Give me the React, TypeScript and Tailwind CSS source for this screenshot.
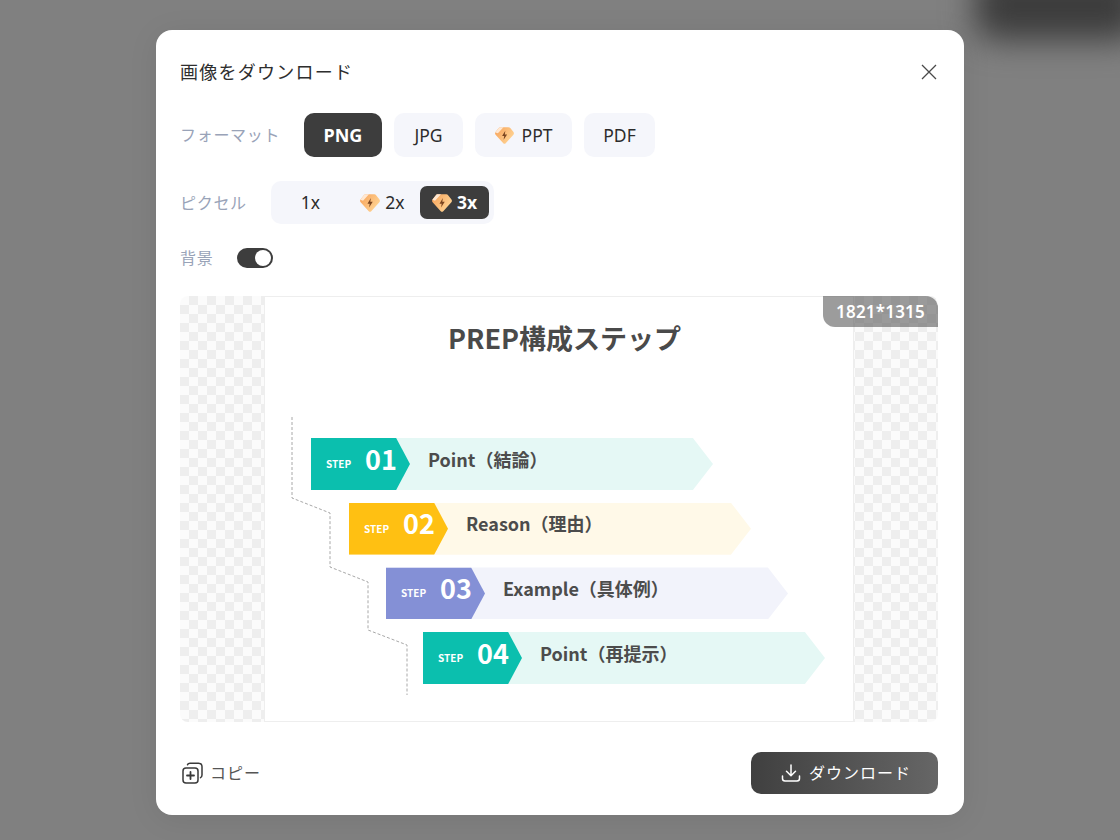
import React from "react";

const FONT = "[font-family:'Noto_Sans','Noto_Sans_CJK_JP',sans-serif]";
const SLIDE = "[font-family:'Noto_Sans_CJK_JP','Noto_Sans',sans-serif]";

function Gem({ className = "" }: { className?: string }) {
  return (
    <svg viewBox="0.5 0.5 19 17" className={className}>
      <defs>
        <linearGradient id="gemg" x1="0" y1="0" x2="1" y2="0.6">
          <stop offset="0" stopColor="#f7a158" />
          <stop offset="1" stopColor="#ffd494" />
        </linearGradient>
      </defs>
      <path d="M6 .8H14Q15.2 .8 16 1.8L19 5.6Q20 7.2 18.7 8.6L11.2 16.8Q10 17.8 8.8 16.8L1.3 8.6Q0 7.2 1 5.6L4 1.8Q4.8 .8 6 .8Z" fill="url(#gemg)" />
      <path d="M5.6 .8H9L3.4 6.8 .8 6 4 1.8Q4.6 1 5.6 .8Z" fill="#ffe8d2" />
      <path d="M10.8 4.2 7.6 9.6H9.7L9.1 13.2 12.6 7.9H10.3Z" fill="#7a4520" />
    </svg>
  );
}

function Chip({ children, active = false, w }: { children: React.ReactNode; active?: boolean; w: string }) {
  return (
    <div
      className={`h-11 ${w} flex items-center justify-center gap-2 rounded-[10px] ${
        active ? "bg-[#3d3d3d] text-[18px] font-bold text-white" : "bg-[#f5f6fb] text-[17.5px] text-[#2c2c2c]"
      }`}
    >
      {children}
    </div>
  );
}

function Step({
  num,
  label,
  ml,
  dark,
  light,
}: {
  num: string;
  label: string;
  ml: string;
  dark: string;
  light: string;
}) {
  return (
    <div className={`relative flex h-[52px] w-[402px] ${ml} ${light} [clip-path:polygon(0_0,95%_0,100%_50%,95%_100%,0_100%)]`}>
      <div className={`flex h-full w-[99px] items-center pl-[15px] text-white ${dark} [clip-path:polygon(0_0,86%_0,100%_50%,86%_100%,0_100%)]`}>
        <span className="w-[39px] text-[10px] font-bold leading-none">STEP</span>
        <span className="mb-[12px] text-[27px] font-bold leading-none">{num}</span>
      </div>
      <div className="mb-[10px] ml-[18px] flex items-center text-[18px] font-bold text-[#4c4c4c]">{label}</div>
    </div>
  );
}

export default function App() {
  return (
    <div className={`relative flex h-[840px] w-[1120px] justify-center overflow-hidden bg-[#808080] pt-[30px] ${FONT}`}>
      <div className="absolute right-[-20px] top-[-30px] h-[70px] w-[165px] rounded-[20px] bg-[#3c3c3c] blur-[16px]" />

      <div className="relative flex h-[785px] w-[808px] flex-col rounded-2xl bg-white pb-[21px] pl-6 pr-[26px] pt-6 shadow-[0_4px_30px_rgba(0,0,0,0.08)]">
        <div className="flex h-9 items-center justify-between">
          <h1 className="text-[18px] font-normal tracking-[1.25px] text-[#2e2e2e]">画像をダウンロード</h1>
          <svg viewBox="0 0 16 16" className="mr-px h-4 w-4" fill="none" stroke="#4a4a4a" strokeWidth="1.3">
            <path d="M1 1 15 15M15 1 1 15" />
          </svg>
        </div>

        <div className="mt-[23px] flex items-center">
          <span className="w-[124px] text-[16px] tracking-[0.7px] text-[#99a3b8]">フォーマット</span>
          <div className="flex gap-3">
            <Chip active w="w-[78px]">PNG</Chip>
            <Chip w="w-[69px]">JPG</Chip>
            <Chip w="w-[97px]">
              <Gem className="h-[17px] w-[19px]" />
              PPT
            </Chip>
            <Chip w="w-[71px]">PDF</Chip>
          </div>
        </div>

        <div className="mt-6 flex items-center">
          <span className="w-[91px] text-[16px] tracking-[0.7px] text-[#99a3b8]">ピクセル</span>
          <div className="flex h-[43px] w-[223px] items-center rounded-[10px] bg-[#f5f6fb] pl-[5px] text-[17.5px] text-[#2c2c2c]">
            <div className="flex h-[33px] w-[69px] items-center justify-center">1x</div>
            <div className="flex h-[33px] w-[75px] items-center justify-center gap-[5px]">
              <Gem className="h-[18px] w-[20px]" />
              2x
            </div>
            <div className="flex h-[33px] w-[69px] items-center justify-center gap-[5px] rounded-[7px] bg-[#3d3d3d] font-bold text-white">
              <Gem className="h-[18px] w-[20px]" />
              3x
            </div>
          </div>
        </div>

        <div className="mt-6 flex h-5 items-center">
          <span className="w-[57px] text-[16px] tracking-[0.7px] text-[#99a3b8]">背景</span>
          <div className="flex h-5 w-9 items-center justify-end rounded-full bg-[#3d3d3d] pr-[2px]">
            <div className="h-4 w-4 rounded-full bg-white" />
          </div>
        </div>

        <div className="relative mt-7 flex h-[426px] justify-center overflow-hidden rounded-lg bg-[repeating-conic-gradient(#eeeeee_0%_25%,#fbfbfb_0%_50%)] bg-[length:18px_18px]">
          <div className={`relative h-full w-[590px] border border-[#eeeeee] bg-white ${SLIDE}`}>
            <h2 className="pl-[11px] pt-[21px] text-center text-[27px] font-bold leading-[40px] text-[#4a4a4a]">PREP構成ステップ</h2>
            <svg className="absolute left-0 top-0" width="590" height="424" fill="none" stroke="#a8a8a8" strokeWidth="1" strokeDasharray="3 2">
              <path d="M27 120V201L65 216V270L103 285V333L142 348V398" />
            </svg>
            <div className="relative mt-[80px] flex flex-col gap-[12.7px]">
              <Step num="01" label="Point（結論）" ml="ml-[46px]" dark="bg-[#0bbfae]" light="bg-[#e5f8f5]" />
              <Step num="02" label="Reason（理由）" ml="ml-[84px]" dark="bg-[#ffc012]" light="bg-[#fff9e8]" />
              <Step num="03" label="Example（具体例）" ml="ml-[121px]" dark="bg-[#8490d6]" light="bg-[#f2f3fb]" />
              <Step num="04" label="Point（再提示）" ml="ml-[158px]" dark="bg-[#0bbfae]" light="bg-[#e5f8f5]" />
            </div>
          </div>
          <div className="absolute right-0 top-0 flex h-[31px] w-[115px] items-center justify-center rounded-bl-xl rounded-tr-xl bg-[#5a5a5a]/60 text-[17px] font-semibold tracking-[0.2px] text-white">
            1821*1315
          </div>
        </div>

        <div className="mt-[30px] flex h-[42px] items-center justify-between">
          <div className="ml-px flex items-center gap-[7px] text-[16px] tracking-[1px] text-[#555]">
            <svg viewBox="0 0 22 22" className="h-[22px] w-[22px]" fill="none" stroke="#3a3a3a" strokeWidth="1.5" strokeLinecap="round">
              <rect x="2" y="6" width="15" height="15" rx="3" />
              <path d="M6.5 2.8Q7 1.2 9 1.2H17.5Q21 1.2 21 4.7V13Q21 15 19.5 15.6" />
              <path d="M9.5 10V17M6 13.5H13" strokeWidth="1.8" />
            </svg>
            コピー
          </div>
          <div className="flex h-[42px] w-[187px] items-center justify-center gap-2 rounded-[10px] bg-gradient-to-r from-[#404040] to-[#666666] pl-[3px] text-[16px] tracking-[1px] text-white">
            <svg viewBox="0 0 20 20" className="h-5 w-5" fill="none" stroke="#ffffff" strokeWidth="1.5" strokeLinecap="round" strokeLinejoin="round">
              <path d="M10 2V12.5M5.5 8.2 10 12.7 14.5 8.2" />
              <path d="M1.5 13V15.5Q1.5 18 4 18H16Q18.5 18 18.5 15.5V13" />
            </svg>
            ダウンロード
          </div>
        </div>
      </div>
    </div>
  );
}
